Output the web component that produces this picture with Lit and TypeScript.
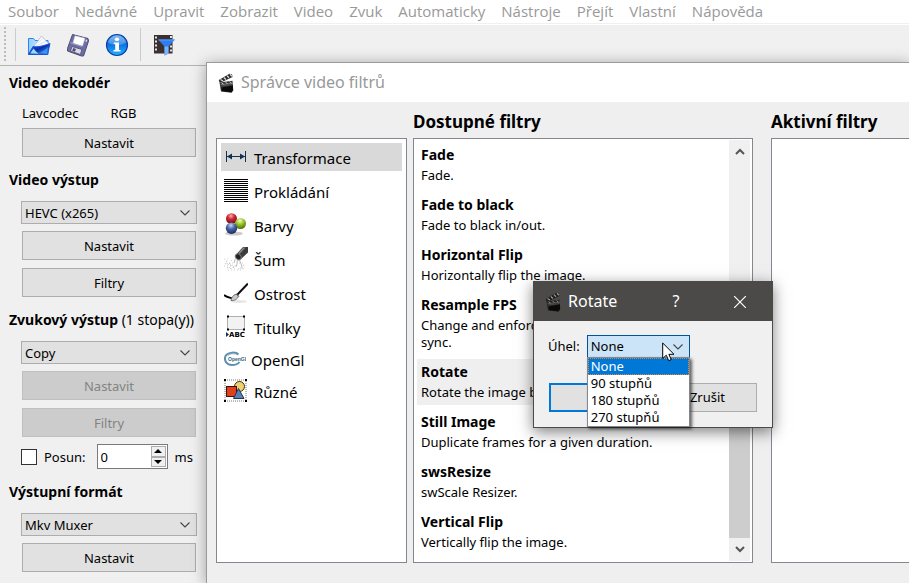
import { LitElement, html, css, svg, nothing } from "lit";
import { customElement, property } from "lit/decorators.js";

const chevron = html`<svg class="chev" viewBox="0 0 10 6" width="10" height="6" aria-hidden="true">
  <path d="M.5 .5 5 5 9.5 .5" fill="none" stroke="#444" stroke-width="1.1" />
</svg>`;

const clapper = (light: boolean) => html`<svg class="clapper" viewBox="0 0 16 20" width="16" height="20" aria-hidden="true">
  <path d="M.8 7 11.500 .8 14 1.200 14.500 4 4 9 1.500 9.500Z" fill=${light ? "#1c1c1c" : "#2a2a2a"} />
  <path d="M2.500 6.500 5 8M5.800 4.500 8 6.500M9 2.600 11 4.800M12 1.300 14 3.300" stroke=${light ? "#9a9a9a" : "#ddd"} stroke-width="1.300" />
  <path d="M1.500 9.500 14.500 7.800 15.300 17.500 13.500 19.800 3 18.500Z" fill=${light ? "#242424" : "#333"} />
  <path d="M2.500 11.800 15 10.200" stroke=${light ? "#666" : "#8a8a8a"} stroke-width=".8" />
  <path d="M3.500 9.800 5.500 11M7.500 9.300 9.500 10.600M11.500 8.700 13.500 10" stroke=${light ? "#8a8a8a" : "#ccc"} />
  <path d="M3.500 14.500 15 12.500 15 17 13.300 19.200 4 18Z" fill="#0a0a0a" />
  <path d="M3.500 13 14.500 11.500" stroke="#555" stroke-width=".8" />
</svg>`;

const openIcon = svg`<svg viewBox="0 0 24 24" width="24" height="24" aria-hidden="true">
  <defs>
    <linearGradient id="fo" x1="0" y1="0" x2="1" y2="1"><stop offset="0" stop-color="#1c5fe8" /><stop offset=".5" stop-color="#0a2fa8" /><stop offset="1" stop-color="#4fb0ff" /></linearGradient>
    <linearGradient id="fb" x1="0" y1="0" x2="1" y2="0"><stop offset="0" stop-color="#8fd0ff" /><stop offset="1" stop-color="#e6f6ff" /></linearGradient>
  </defs>
  <path d="M1.500 5.500H6.500L8 7.500H21V21.500H1.500Z" fill="url(#fb)" stroke="#2f80f0" />
  <path d="M7 13 14.500 3 22 11 18 15H7Z" fill="#fbfcff" stroke="#a9b6d6" stroke-width=".8" />
  <path d="M8 12 16 5.500M9 13 19 8" stroke="#dde3f2" />
  <path d="M1.500 21.500 6 13.500C11 14.500 17 12.500 23 10.500L20.500 21.500Z" fill="url(#fo)" stroke="#1b55dc" />
  <path d="M3 20.500 6.500 15.500C8 17 9 19 12 20.800Z" fill="#9fd6ff" />
  <path d="M12 19.500C16 19 19 16 21 14L19.800 20.500Z" fill="#3a92ff" />
</svg>`;

const saveIcon = svg`<svg viewBox="0 0 24 24" width="24" height="24" aria-hidden="true">
  <path d="M6.500 1.500 22 5.500 22.500 8 17.500 23 15.500 23 1.500 18 1.500 15.500Z" fill="#6e6ea4" stroke="#4a4a72" stroke-linejoin="round" />
  <path d="M9 2.800 19 5.300 16.500 13 6.800 10.500Z" fill="#fff" stroke="#c8c8de" stroke-width=".6" />
  <path d="M20 6.500 21.300 7 20.600 9 19.400 8.600Z" fill="#dcdcf0" />
  <path d="M6 13.500 16 16.500 14.300 21.500 4.500 18Z" fill="#d9d9ea" stroke="#4d4d70" stroke-width=".8" />
  <path d="M7.200 15 10 15.900 9 18.800 6.200 17.700Z" fill="#50506c" />
  <path d="M4 9.500 16 13.500" stroke="#9c9cc8" />
</svg>`;

const infoIcon = svg`<svg viewBox="0 0 24 24" width="24" height="24" aria-hidden="true">
  <defs>
    <linearGradient id="ig" x1="0" y1="0" x2="0" y2="1"><stop offset="0" stop-color="#59a9f5" /><stop offset=".45" stop-color="#0a6fe0" /><stop offset="1" stop-color="#22b4ff" /></linearGradient>
  </defs>
  <circle cx="12" cy="12" r="10.500" fill="url(#ig)" stroke="#0c3ea6" stroke-width="1.200" />
  <path d="M3 9.500A9.300 9.300 0 0 1 21 9.500C16 13 8 13 3 9.500Z" fill="#fff" opacity=".25" />
  <ellipse cx="12" cy="6.300" rx="2.200" ry="1.900" fill="#fff" />
  <path d="M8.800 9.500H14V17H15.500V18.500H8.500V17H10.200V11H8.800Z" fill="#fff" />
</svg>`;

const filterIcon = svg`<svg viewBox="0 0 24 24" width="24" height="24" aria-hidden="true">
  <path d="M2 2H20.500V20.500H2Z" fill="#3b2f2f" />
  <path d="M3 3.500h2v2h-2zM3 7.500h2v2h-2zM3 11.500h2v2h-2zM3 15.500h2v2h-2zM18 3h2v2h-2zM18 12.500h2v2h-2zM18 16.500h2v2h-2z" fill="#e8e4e4" />
  <path d="M6 6.500H23L16.500 13.500V20.500L12.500 22.500V13.500Z" fill="#2f7df2" />
  <path d="M12.500 13.500H16.500V20.500L12.500 22.500Z" fill="#7ab4fa" />
  <path d="M6 6.500H23L22 7.600H7Z" fill="#5aa0fa" />
</svg>`;

const icons: Record<string, unknown> = {
  transform: svg`<svg viewBox="0 0 24 24" width="24" height="24" aria-hidden="true">
    <path d="M2.500 6V17M21.500 6V17M3 11.500H21" stroke="#12304f" fill="none" />
    <path d="M3 11.500 8 8.500V14.500ZM21 11.500 16 8.500V14.500Z" fill="#12304f" />
  </svg>`,
  lines: svg`<svg viewBox="0 0 24 24" width="24" height="24" aria-hidden="true">
    ${Array.from({ length: 12 }, (_, i) => svg`<rect x="0" y=${i * 2} width="24" height="1" fill="#000" />`)}
  </svg>`,
  colors: svg`<svg viewBox="0 0 24 24" width="24" height="24" aria-hidden="true">
    <defs>
      <radialGradient id="cr" cx=".45" cy=".25" r=".75"><stop offset="0" stop-color="#ffb0b0" /><stop offset=".4" stop-color="#d02a35" /><stop offset="1" stop-color="#6a0a12" /></radialGradient>
      <radialGradient id="cg" cx=".45" cy=".25" r=".75"><stop offset="0" stop-color="#f2ffc0" /><stop offset=".45" stop-color="#9cc62a" /><stop offset="1" stop-color="#4d6a08" /></radialGradient>
      <radialGradient id="cb" cx=".45" cy=".25" r=".75"><stop offset="0" stop-color="#c8d4f4" /><stop offset=".45" stop-color="#4a66a8" /><stop offset="1" stop-color="#1c2a58" /></radialGradient>
    </defs>
    <ellipse cx="10" cy="20.500" rx="9" ry="2" fill="#000" opacity=".2" />
    <circle cx="7.500" cy="5.700" r="5.500" fill="url(#cr)" />
    <circle cx="16.500" cy="10.500" r="5.500" fill="url(#cg)" />
    <circle cx="7.500" cy="15.200" r="5.700" fill="url(#cb)" />
  </svg>`,
  noise: svg`<svg viewBox="0 0 24 24" width="24" height="24" aria-hidden="true">
    <path d="M12.500 7 19 0H24V5.500L16.500 12.500Z" fill="#3c3c3c" />
    <path d="M14.500 5.500 19.500 .5 21.500 .5 15.500 7Z" fill="#8c8c8c" />
    <ellipse cx="14.300" cy="9.800" rx="2.600" ry="3.200" transform="rotate(-42 14.300 9.800)" fill="#222" stroke="#777" />
    <path d="M13.500 12.500 13 17 12 20M15.500 13 17.500 18 18 21M11.500 11.500 10 16" stroke="#aaa" stroke-width=".8" fill="none" />
    <path d="M1 17l2-1 1 2 2-2 1 3 2-1M3 21l2-1 2 2 2-2 2 2M2 14l2 1M14 22l3-1 2 1 2-2M7 13l1 1M19 18l2 1M9 20l3-2" stroke="#b4b4b4" stroke-width=".9" stroke-dasharray="1 1" fill="none" />
    <path d="M0 12h4M5 16h6M0 19h9M4 23h13M15 16h4" stroke="#c6c6c6" stroke-width=".8" stroke-dasharray="1 2" />
  </svg>`,
  sharp: svg`<svg viewBox="0 0 24 24" width="24" height="24" aria-hidden="true">
    <ellipse cx="15" cy="20.500" rx="8" ry="1.500" fill="#000" opacity=".1" />
    <path d="M0 14C3 16.500 5 16.500 8.500 17.500" stroke="#000" stroke-width="1.800" fill="none" />
    <path d="M7 19.500C7 17 9 14 12.500 13L14.500 15C13.500 18.500 10 20 7 19.500Z" fill="#c8c8c8" stroke="#555" stroke-width=".8" />
    <path d="M13 14 24 2.500" stroke="#111" stroke-width="2" />
    <path d="M12.500 13 15 15.500" stroke="#777" />
  </svg>`,
  subtitles: svg`<svg viewBox="0 0 24 24" width="24" height="24" aria-hidden="true">
    <rect x="3.500" y="1.500" width="17" height="13" fill="#f2f2f2" stroke="#666" stroke-dasharray="1 1" />
    <path d="M3 1.500h2M19 1.500h2M19 14.500h2M3 14.500h2" stroke="#000" stroke-width="2" />
    <path d="M2 17 5 19.500 2 22Z" fill="#12304f" />
    <text x="5" y="22" font-family="DejaVu Sans" font-weight="bold" font-size="7" fill="#000">ABC</text>
  </svg>`,
  opengl: svg`<svg viewBox="0 0 22 16" width="22" height="16" aria-hidden="true">
    <path d="M14.500 3.500C12 .8 4 .8 1.500 5C-.3 10 3 14 8 14C11 14 14 13 15.500 11" fill="none" stroke="#5f8fae" stroke-width="2" />
    <path d="M4 5C5 3 9 2 13 3.500" fill="none" stroke="#8fb4cb" />
    <text x="4" y="10" font-family="Liberation Sans" font-weight="bold" font-size="5" fill="#2f5f80">OpenGL</text>
  </svg>`,
  misc: svg`<svg viewBox="0 0 24 24" width="24" height="24" aria-hidden="true">
    <rect x="1" y="1" width="21" height="21" fill="none" stroke="#777" stroke-dasharray="1 1" />
    <path d="M0 0h2v2h-2zM21 0h2v2h-2zM0 21h2v2h-2zM21 21h2v2h-2z" fill="#000" />
    <circle cx="15.500" cy="7.500" r="5" fill="#f0d070" stroke="#3a3010" />
    <rect x="2.500" y="7.500" width="10" height="10" fill="#e0401c" stroke="#3a1208" />
    <path d="M14.500 9.500 20 19.500H9.500Z" fill="#5a7fb4" stroke="#24344e" />
  </svg>`,
};

const categories = [
  ["transform", "Transformace"],
  ["lines", "Prokládání"],
  ["colors", "Barvy"],
  ["noise", "Šum"],
  ["sharp", "Ostrost"],
  ["subtitles", "Titulky"],
  ["opengl", "OpenGl"],
  ["misc", "Různé"],
];

const filters = [
  ["Fade", "Fade."],
  ["Fade to black", "Fade to black in/out."],
  ["Horizontal Flip", "Horizontally flip the image."],
  ["Resample FPS", "Change and enforce FPS. Keep duration and sync."],
  ["Rotate", "Rotate the image by a multiple of 90°."],
  ["Still Image", "Duplicate frames for a given duration."],
  ["swsResize", "swScale Resizer."],
  ["Vertical Flip", "Vertically flip the image."],
];

const shared = css`
  * { box-sizing: border-box; }
  h1, h2, h3, p, ul { margin: 0; padding: 0; }
  ul { list-style: none; }
  svg { display: block; flex: none; }
  button, input, select { font: inherit; color: inherit; margin: 0; }
  .btn {
    height: 29px; padding: 0; background: #e1e1e1; border: 1px solid #adadad;
    border-radius: 0; font-size: 13px; text-align: center;
  }
  .btn:disabled { background: #ccc; border-color: #bfbfbf; color: #838383; }
  .combo { display: grid; height: 23px; align-items: center; }
  .combo select {
    grid-area: 1 / 1; width: 100%; height: 23px; padding: 0 3px; appearance: none;
    background: #e1e1e1; border: 1px solid #adadad; border-radius: 0; font-size: 13px; outline: none;
  }
  .combo .chev { grid-area: 1 / 1; justify-self: end; margin-right: 7px; pointer-events: none; }
`;

@customElement("side-panel")
export class SidePanel extends LitElement {
  static styles = [shared, css`
    :host { display: block; width: 206px; padding: 8px 9px 0; font-size: 13px; line-height: 18px; }
    h2 { font-size: 14px; line-height: 18px; white-space: nowrap; }
    h2 span { font-weight: normal; }
    .group { display: flex; flex-direction: column; gap: 8px; padding: 12px 1px 0 13px; }
    .group + h2 { margin-top: 14px; }
    .group .combo { margin: 0 -1px -1px; }
    .info { display: flex; gap: 32px; margin-bottom: -2px; }
    .shift { display: flex; align-items: center; gap: 7px; height: 25px; margin: -1px -4px 0 -1px; }
    .shift input[type="checkbox"] {
      appearance: none; width: 16px; height: 16px; background: #fff; border: 1px solid #333; flex: none;
    }
    .shift label { margin-right: 4px; }
    .spin {
      display: flex; width: 71px; height: 25px; background: #fff; border: 1px solid #7a7a7a; padding: 1px;
    }
    .spin input {
      flex: 1; min-width: 0; padding: 0 2px; border: 0; background: none; outline: none; appearance: textfield;
    }
    .spin input::-webkit-inner-spin-button { appearance: none; margin: 0; }
    .arrows { display: flex; flex-direction: column; width: 15px; }
    .arrows button {
      flex: 1; display: grid; place-items: center; padding: 0; background: #f0f0f0; border: 1px solid #adadad;
    }
  `];

  private combo(label: string, value: string) {
    return html`<div class="combo"><select aria-label=${label}><option>${value}</option></select>${chevron}</div>`;
  }

  render() {
    return html`
      <h2>Video dekodér</h2>
      <div class="group">
        <div class="info"><span>Lavcodec</span><span>RGB</span></div>
        <button class="btn">Nastavit</button>
      </div>
      <h2>Video výstup</h2>
      <div class="group">
        ${this.combo("Video výstup", "HEVC (x265)")}
        <button class="btn">Nastavit</button>
        <button class="btn">Filtry</button>
      </div>
      <h2>Zvukový výstup <span>(1 stopa(y))</span></h2>
      <div class="group">
        ${this.combo("Zvukový výstup", "Copy")}
        <button class="btn" disabled>Nastavit</button>
        <button class="btn" disabled>Filtry</button>
        <div class="shift">
          <input type="checkbox" id="shift" /><label for="shift">Posun:</label>
          <div class="spin">
            <input type="number" value="0" aria-label="Posun" />
            <div class="arrows">
              <button aria-label="+"><svg width="8" height="4" viewBox="0 0 8 4"><path d="M0 4 4 0 8 4Z" /></svg></button>
              <button aria-label="-"><svg width="8" height="4" viewBox="0 0 8 4"><path d="M0 0 4 4 8 0Z" /></svg></button>
            </div>
          </div>
          <span>ms</span>
        </div>
      </div>
      <h2>Výstupní formát</h2>
      <div class="group">
        ${this.combo("Výstupní formát", "Mkv Muxer")}
        <button class="btn">Nastavit</button>
      </div>
    `;
  }
}

@customElement("filter-manager")
export class FilterManager extends LitElement {
  static styles = [shared, css`
    :host { display: flex; flex-direction: column; background: #efefef; }
    header { display: flex; align-items: center; gap: 7px; height: 39px; padding-left: 11px; background: #fff; }
    h1 { padding-bottom: 2px; font-size: 16px; line-height: 22px; font-weight: normal; color: #999; }
    .body {
      flex: 1; display: grid; grid-template-columns: 191px 340px 1fr; grid-template-rows: 36px 1fr;
      column-gap: 6px; padding: 0 0 20px 9px;
    }
    h2 { font-size: 17px; line-height: 22px; padding-top: 9px; white-space: nowrap; }
    .mid { grid-column: 2; }
    .end { margin-left: 12px; }
    .panel { background: #fff; border: 1px solid #828790; grid-row: 2; }
    .active { border-right: 0; }
    .cats { display: flex; flex-direction: column; gap: 6px; padding: 4px; }
    .cats li {
      display: flex; align-items: center; gap: 6px; height: 28px; padding-left: 3px;
      font-size: 15px; line-height: 20px;
    }
    .cats span { padding-top: 2px; }
    .cats li.small { height: 24px; gap: 5px; }
    .cats li.sel { background: #d9d9d9; }
    .scroller { display: flex; padding: 1px 2px; }
    .filters { flex: 1; display: flex; flex-direction: column; gap: 4px; padding: 2px 0 0 1px; }
    .filters li { padding: 4px 24px 4px 4px; }
    .filters li.sel { background: #efefef; }
    .filters h3 { font-size: 14px; line-height: 17px; margin-bottom: 4px; }
    .filters p { font-size: 13px; line-height: 17px; }
    .bar { display: flex; flex-direction: column; width: 21px; background: #f0f0f0; }
    .bar button { display: grid; place-items: center; height: 23px; padding: 0; border: 0; background: none; }
    .track { flex: 1; display: flex; flex-direction: column; justify-content: flex-end; }
    .thumb { height: 60%; background: #cdcdcd; }
  `];

  private arrow(label: string, d: string) {
    return html`<button aria-label=${label}><svg width="10" height="7" viewBox="0 0 10 7">
      <path d=${d} fill="none" stroke="#555" stroke-width="2" /></svg></button>`;
  }

  render() {
    return html`
      <header>${clapper(false)}<h1>Správce video filtrů</h1></header>
      <div class="body">
        <h2 class="mid">Dostupné filtry</h2>
        <h2 class="end">Aktivní filtry</h2>
        <ul class="panel cats">
          ${categories.map(([icon, name], i) => html`
            <li class=${i === 0 ? "sel" : icon === "opengl" ? "small" : nothing}>${icons[icon]}<span>${name}</span></li>`)}
        </ul>
        <div class="panel scroller">
          <ul class="filters">
            ${filters.map(([name, text]) => html`
              <li class=${name === "Rotate" ? "sel" : nothing}><h3>${name}</h3><p>${text}</p></li>`)}
          </ul>
          <div class="bar">
            ${this.arrow("▲", "M1 6 5 2 9 6")}
            <div class="track"><div class="thumb"></div></div>
            ${this.arrow("▼", "M1 1 5 5 9 1")}
          </div>
        </div>
        <div class="panel active end"></div>
      </div>
    `;
  }
}

@customElement("rotate-dialog")
export class RotateDialog extends LitElement {
  static styles = [shared, css`
    :host { display: block; background: #f0f0f0; border: 1px solid #4b4a48; font-size: 13px; line-height: 17px; }
    header { display: flex; align-items: center; height: 39px; padding-left: 11px; background: #4b4a48; color: #fff; }
    h1 { flex: 1; margin-left: 7px; padding-bottom: 2px; font-size: 16px; line-height: 22px; font-weight: normal; }
    header button {
      display: grid; place-items: center; height: 39px; padding: 0; border: 0; background: none;
      font-size: 16px; width: 64px;
    }
    .row { display: flex; align-items: center; gap: 7px; padding: 14px 14px 0; }
    .pick { position: relative; width: 103px; }
    .pick .combo select { background: #cce4f7; border-color: #005499; }
    .popup {
      position: absolute; top: 22px; left: 0; width: 103px; background: #fff; border: 1px solid #828790;
      box-shadow: 2px 2px 3px rgba(0, 0, 0, 0.6); z-index: 1;
    }
    .popup li { padding: 0 3px; white-space: nowrap; }
    .popup li.sel { background: #0078d7; color: #fff; outline: 1px dotted #e08a3c; outline-offset: -1px; }
    .actions { display: flex; gap: 8px; padding: 25px 15px 15px; }
    .actions .btn { flex: 1; }
    .actions .default { border: 2px solid #0078d7; }
    .cursor { position: absolute; left: 75px; top: 7px; z-index: 2; }
  `];

  @property({ type: Array }) options = ["None", "90 stupňů", "180 stupňů", "270 stupňů"];

  render() {
    return html`
      <header>
        ${clapper(true)}
        <h1>Rotate</h1>
        <button>?</button>
        <button aria-label="×"><svg width="12" height="12" viewBox="0 0 12 12"><path d="M0 0 12 12M12 0 0 12" stroke="#fff" stroke-width="1.200" /></svg></button>
      </header>
      <div class="row">
        <label for="angle">Úhel:</label>
        <div class="pick">
          <div class="combo">
            <select id="angle">${this.options.map((o) => html`<option>${o}</option>`)}</select>${chevron}
          </div>
          <ul class="popup" role="listbox">
            ${this.options.map((o, i) => html`<li role="option" aria-selected=${i === 0} class=${i === 0 ? "sel" : nothing}>${o}</li>`)}
          </ul>
          <svg class="cursor" width="13" height="20" viewBox="0 0 13 20" aria-hidden="true">
            <path d="M.7 1V16.500L4.300 13.200 6.700 18.700 9.200 17.600 6.900 12.300H12Z" fill="#fff" stroke="#000" />
          </svg>
        </div>
      </div>
      <div class="actions">
        <button class="btn default">OK</button>
        <button class="btn">Zrušit</button>
      </div>
    `;
  }
}

@customElement("app-root")
export class AppRoot extends LitElement {
  static styles = [shared, css`
    :host {
      display: block; position: relative; min-height: 100vh; overflow: hidden; background: #f0f0f0; color: #000;
      font-family: "Noto Sans", "Open Sans", sans-serif;
    }
    nav { display: flex; gap: 16px; height: 23px; padding-left: 8px; background: #fff; font-family: "Open Sans", "Noto Sans", sans-serif; }
    nav a { color: #999; text-decoration: none; font-size: 15px; line-height: 23px; white-space: nowrap; }
    .toolbar {
      display: flex; align-items: center; height: 43px; padding-left: 4px;
      border-top: 1px solid #f0f0f0; border-bottom: 1px solid #b4b4b4; box-shadow: inset 0 1px #fff;
    }
    .grip { width: 2px; height: 35px; margin-right: 9px; background: repeating-linear-gradient(#bbb 0 2px, transparent 2px 4px); }
    .sep { width: 1px; height: 33px; background: #ccc; }
    .toolbar button { padding: 0; border: 0; background: none; width: 39px; height: 33px; display: grid; place-items: center; }
    .toolbar .sep + button { margin-left: 3px; }
    .toolbar button + .sep { margin-left: 4px; }
    filter-manager {
      position: absolute; left: 206px; top: 62px; right: -1px; bottom: 0;
      border: 1px solid #9a9a9a; border-bottom: 0; box-shadow: 0 2px 14px rgba(0, 0, 0, 0.35);
    }
    rotate-dialog { position: absolute; left: 533px; top: 281px; width: 240px; box-shadow: 0 4px 14px rgba(0, 0, 0, 0.5); }
  `];

  render() {
    const menu = ["Soubor", "Nedávné", "Upravit", "Zobrazit", "Video", "Zvuk", "Automaticky", "Nástroje", "Přejít", "Vlastní", "Nápověda"];
    return html`
      <nav>${menu.map((m) => html`<a href="#">${m}</a>`)}</nav>
      <div class="toolbar">
        <div class="grip"></div>
        <div class="sep"></div>
        <button>${openIcon}</button>
        <button>${saveIcon}</button>
        <button>${infoIcon}</button>
        <div class="sep"></div>
        <button>${filterIcon}</button>
      </div>
      <side-panel></side-panel>
      <filter-manager></filter-manager>
      <rotate-dialog></rotate-dialog>
    `;
  }
}
